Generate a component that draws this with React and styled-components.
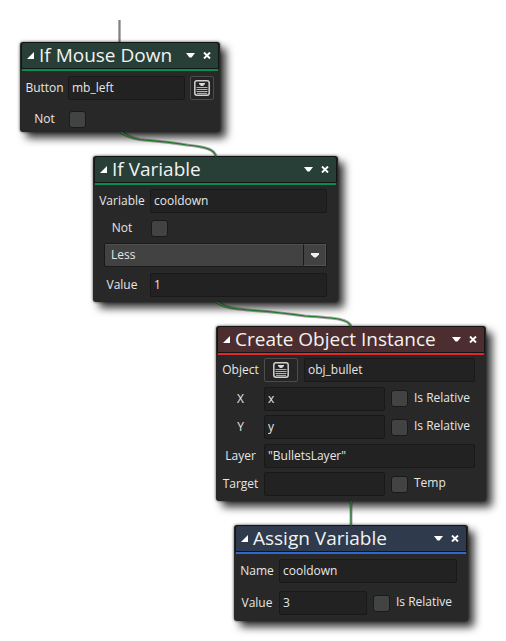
import React, { useId, useState } from "react";
import styled, { createGlobalStyle } from "styled-components";

const GlobalStyle = createGlobalStyle`
  * { box-sizing: border-box; }
  body {
    margin: 0;
    background: #ffffff;
    font-family: "Open Sans", "Noto Sans", sans-serif;
    font-size: 12px;
    color: #e6e6e6;
  }
  button, input, select { font: inherit; color: inherit; }
`;

const Canvas = styled.main`
  position: relative;
  min-height: 100vh;
  overflow: hidden;
`;

const Wires = styled.svg`
  position: absolute;
  top: 0;
  left: 0;
  width: 100%;
  height: 100%;
  pointer-events: none;
`;

const Node = styled.section`
  position: absolute;
  left: ${(p) => p.$x}px;
  top: ${(p) => p.$y}px;
  width: ${(p) => p.$width}px;
  padding: 0 2px;
  border-radius: 3px;
  background: #282828;
  box-shadow: 0 0 3px rgba(0, 0, 0, 0.7), 6px 6px 9px rgba(0, 0, 0, 0.8);
`;

const themes = {
  green: { bar: "#273f36", line: "#078d52" },
  red: { bar: "#4c2d30", line: "#dd2a2f" },
  blue: { bar: "#2f3a4d", line: "#2f69d0" },
};

const Header = styled.header`
  display: flex;
  align-items: center;
  height: 27px;
  margin: 0 -1px;
  padding: 0 3px 0 4px;
  border: 1px solid #131413;
  border-radius: 3px 3px 0 0;
  background: ${(p) => themes[p.$tone].bar};
`;

const Stripe = styled.div`
  height: 2px;
  background: ${(p) => themes[p.$tone].line};
`;

const Title = styled.h2`
  flex: 1;
  margin: 0 0 0 4px;
  padding-bottom: 2px;
  font-size: 19px;
  line-height: 24px;
  font-weight: 400;
  white-space: nowrap;
  color: #f2f2f2;
`;

const HeaderButton = styled.button`
  display: flex;
  align-items: center;
  justify-content: center;
  flex: none;
  width: ${(p) => p.$width}px;
  height: 16px;
  padding: 0;
  border: 0;
  background: none;
  color: #ffffff;
`;

const Body = styled.div`
  display: flex;
  flex-direction: column;
  justify-content: space-between;
  gap: ${(p) => p.$gap}px;
  min-height: ${(p) => p.$minHeight || 0}px;
  padding: ${(p) => p.$top}px 9px ${(p) => p.$bottom}px 0;
`;

const Row = styled.div`
  display: flex;
  align-items: center;
  gap: 6px;
  height: 24px;
`;

const Label = styled.label`
  flex: none;
  width: ${(p) => p.$width}px;
  margin-right: -6px;
  padding-right: 1px;
  text-align: center;
  line-height: 16px;
`;

const TextBox = styled.input`
  flex: 1;
  min-width: 0;
  height: 24px;
  padding: 0 3px 1px;
  border: 1px solid #191919;
  border-radius: 2px;
  background: #222222;
  outline: none;
`;

const Check = styled.input`
  appearance: none;
  flex: none;
  width: 17px;
  height: 17px;
  margin: 0 0 0 ${(p) => (p.$lead ? 1 : 0)}px;
  border: 1px solid #191a19;
  border-radius: 3px;
  background: #424443;
  &:checked { background: #078d52; }
`;

const CheckLabel = styled.label`
  flex: none;
  width: ${(p) => p.$width}px;
  padding-bottom: 2px;
  line-height: 16px;
  white-space: nowrap;
`;

const PickButton = styled.button`
  display: flex;
  align-items: center;
  justify-content: center;
  flex: none;
  width: ${(p) => p.$width}px;
  height: 24px;
  padding: 0;
  border: 1px solid #4c4c4c;
  border-radius: 2px;
  background: #252525;
`;

const PickEnd = styled.div`
  display: flex;
  margin: 0 -5px 0 -1px;
`;

const SelectFrame = styled.div`
  position: relative;
  margin: 0 0 3px 9px;
`;

const Select = styled.select`
  appearance: none;
  display: block;
  width: 100%;
  height: 24px;
  padding: 0 28px 1px 6px;
  border: 1px solid #191919;
  border-radius: 2px;
  background: #424242;
  box-shadow: inset 0 1px 0 #505050;
  outline: none;
`;

const SelectArrow = styled.span`
  position: absolute;
  top: 1px;
  right: 1px;
  bottom: 1px;
  display: flex;
  align-items: center;
  justify-content: center;
  width: 23px;
  border: 1px solid #525252;
  border-left-color: #191919;
  background: #424242;
  color: #f0f0f0;
  pointer-events: none;
`;

const DownArrow = () => (
  <svg width="9" height="5" viewBox="0 0 9 5" aria-hidden="true">
    <path d="M0 0H9L5.5 4.5H3.5Z" fill="currentColor" />
  </svg>
);

const SelectChevron = () => (
  <svg width="8" height="5" viewBox="0 0 8 5" aria-hidden="true">
    <path d="M0 0H8V1.5L5 4.5H3L0 1.5Z" fill="currentColor" />
  </svg>
);

const Corner = () => (
  <svg width="7" height="7" viewBox="0 0 7 7" aria-hidden="true">
    <path d="M7 0V7H0Z" fill="currentColor" />
  </svg>
);

const Cross = () => (
  <svg width="8" height="7" viewBox="0 0 8 7" aria-hidden="true">
    <path d="M1 0.5L7 6.5M7 0.5L1 6.5" stroke="currentColor" strokeWidth="1.9" />
  </svg>
);

const ListIcon = () => (
  <svg width="16" height="16" viewBox="0 0 16 16" aria-hidden="true">
    <rect x="0.8" y="0.8" width="14.4" height="14.4" rx="2.2" fill="none" stroke="#d2d2d2" strokeWidth="1.5" />
    <path d="M5 3H11V4L9 6H7L5 4Z" fill="#d8d8d8" />
    <path d="M2.5 7.5H13.5M2.5 9.5H13.5M2.5 11.5H13.5M3 13.4H13" stroke="#b4b4b4" strokeWidth="1" />
  </svg>
);

function ActionNode({ title, tone, x, y, width, gap, minHeight, top, bottom, children }) {
  return (
    <Node $x={x} $y={y} $width={width} aria-label={title}>
      <Header $tone={tone}>
        <HeaderButton $width={9} aria-label="Collapse"><Corner /></HeaderButton>
        <Title>{title}</Title>
        <HeaderButton $width={17} aria-label="Options"><DownArrow /></HeaderButton>
        <HeaderButton $width={16} aria-label="Close"><Cross /></HeaderButton>
      </Header>
      <Stripe $tone={tone} />
      <Body $gap={gap} $minHeight={minHeight} $top={top} $bottom={bottom}>{children}</Body>
    </Node>
  );
}

function Field({ label, labelWidth, value, pick, pickFirst, toggle }) {
  const id = useId();
  const [text, setText] = useState(value);
  return (
    <Row>
      <Label htmlFor={id} $width={labelWidth}>{label}</Label>
      {pickFirst && <PickButton $width={34} aria-label={`Choose ${label}`}><ListIcon /></PickButton>}
      <TextBox id={id} value={text} onChange={(e) => setText(e.target.value)} />
      {pick && <PickEnd><PickButton $width={24} aria-label={`Choose ${label}`}><ListIcon /></PickButton></PickEnd>}
      {toggle && (
        <>
          <Check type="checkbox" id={`${id}-toggle`} />
          <CheckLabel htmlFor={`${id}-toggle`} $width={61}>{toggle}</CheckLabel>
        </>
      )}
    </Row>
  );
}

function NotRow({ labelWidth }) {
  const id = useId();
  return (
    <Row>
      <Label htmlFor={id} $width={labelWidth}>Not</Label>
      <Check $lead type="checkbox" id={id} />
    </Row>
  );
}

const links = [
  "M121 132C126 136 131 138 140 139.500C155 141 165 141.500 187 145C205 147 215 149 216 157",
  "M217 302C222 306 228 308 238 309C255 311 270 311 305 316C336 318 350 319 351 327",
  "M351 501V526",
];

export default function App() {
  return (
    <>
      <GlobalStyle />
      <Canvas>
        <Wires aria-hidden="true">
          <g fill="none">
            <path d="M119.5 20V43" stroke="#b0b0b0" strokeWidth="3" />
            <path d="M119.5 20V43" stroke="#808080" strokeWidth="1" />
          </g>
        </Wires>
        <ActionNode title="If Mouse Down" tone="green" x={20} y={42} width={200} gap={7} top={5} bottom={1}>
          <Field label="Button" labelWidth={46} value="mb_left" pick />
          <NotRow labelWidth={46} />
        </ActionNode>
        <ActionNode title="If Variable" tone="green" x={93} y={156} width={245} gap={3} top={4} bottom={5}>
          <Field label="Variable" labelWidth={55} value="cooldown" />
          <NotRow labelWidth={55} />
          <SelectFrame>
            <Select aria-label="Comparison" defaultValue="Less">
              <option>Equal</option>
              <option>Less</option>
              <option>Greater</option>
            </Select>
            <SelectArrow><SelectChevron /></SelectArrow>
          </SelectFrame>
          <Field label="Value" labelWidth={55} value="1" />
        </ActionNode>
        <ActionNode title="Create Object Instance" tone="red" x={216} y={326} width={270} gap={4} minHeight={146} top={3} bottom={5}>
          <Field label="Object" labelWidth={46} value="obj_bullet" pickFirst />
          <Field label="X" labelWidth={46} value="x" toggle="Is Relative" />
          <Field label="Y" labelWidth={46} value="y" toggle="Is Relative" />
          <Field label="Layer" labelWidth={46} value={'"BulletsLayer"'} />
          <Field label="Target" labelWidth={46} value="" toggle="Temp" />
        </ActionNode>
        <ActionNode title="Assign Variable" tone="blue" x={234} y={525} width={234} gap={8} top={5} bottom={6}>
          <Field label="Name" labelWidth={43} value="cooldown" />
          <Field label="Value" labelWidth={43} value="3" toggle="Is Relative" />
        </ActionNode>
        <Wires aria-hidden="true">
          {links.map((d) => (
            <g key={d} fill="none">
              <path d={d} stroke="#000000" strokeOpacity="0.35" strokeWidth="3" />
              <path d={d} stroke="#1c7a28" strokeWidth="1.2" />
            </g>
          ))}
        </Wires>
      </Canvas>
    </>
  );
}
